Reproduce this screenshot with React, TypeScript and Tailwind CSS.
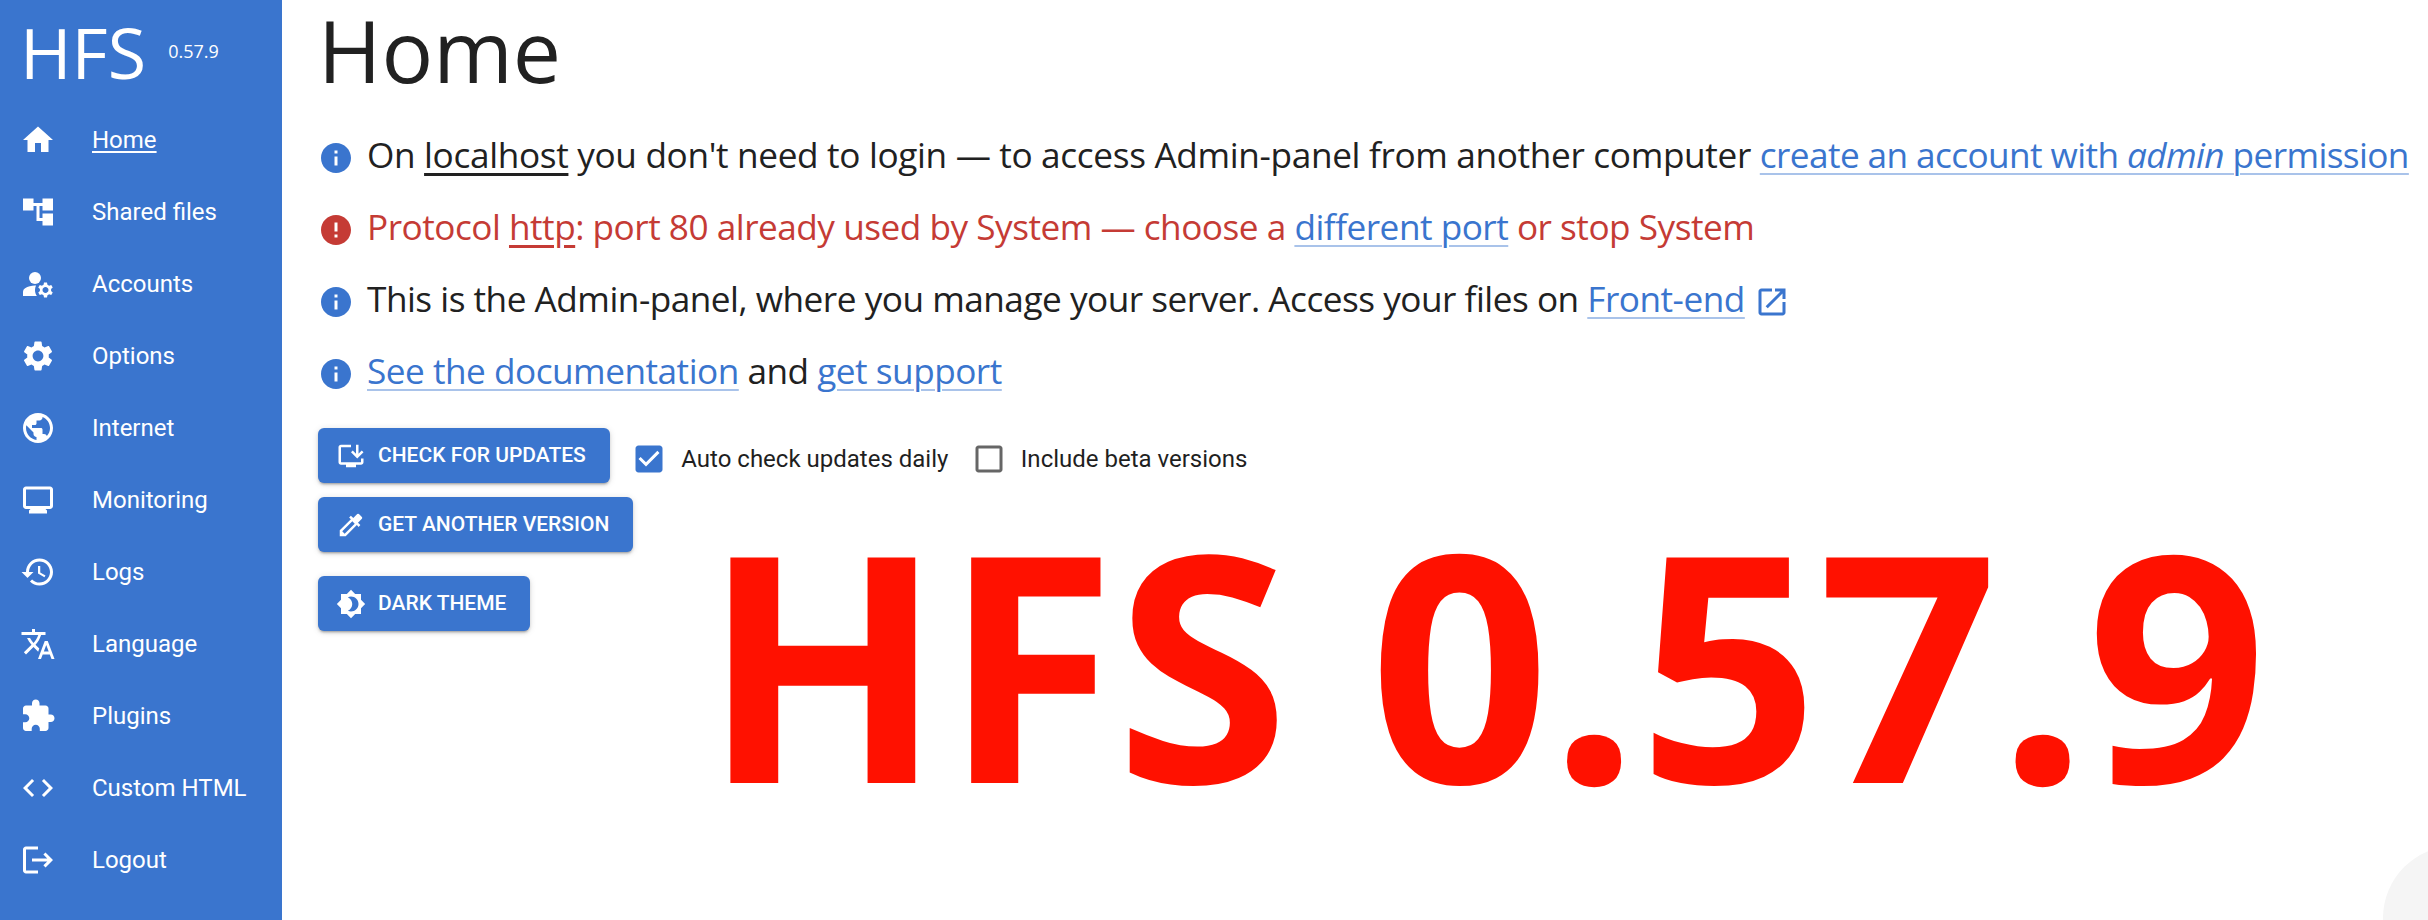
const navItems = [
  { label: 'Home', active: true, paths: ['M10 20v-6h4v6h5v-8h3L12 3 2 12h3v8z'] },
  { label: 'Shared files', paths: ['M22 11V3h-7v3H9V3H2v8h7V8h2v10h4v3h7v-8h-7v3h-2V8h2v3z'] },
  {
    label: 'Accounts',
    paths: [
      'M10.67 13.02c-.22-.01-.44-.02-.67-.02-2.42 0-4.68.67-6.61 1.82-.88.52-1.39 1.5-1.39 2.53V20h9.26c-.79-1.13-1.26-2.51-1.26-4 0-1.07.25-2.07.67-2.98z',
      'M14 8a4 4 0 1 1-8 0 4 4 0 0 1 8 0z',
      'M20.75 16c0-.22-.03-.42-.06-.63l1.14-1.01-1-1.73-1.45.49c-.32-.27-.68-.48-1.08-.63L18 11h-2l-.3 1.49c-.4.15-.76.36-1.08.63l-1.45-.49-1 1.73 1.14 1.01c-.03.21-.06.41-.06.63s.03.42.06.63l-1.14 1.01 1 1.73 1.45-.49c.32.27.68.48 1.08.63L16 21h2l.3-1.49c.4-.15.76-.36 1.08-.63l1.45.49 1-1.73-1.14-1.01c.03-.21.06-.41.06-.63zM17 18c-1.1 0-2-.9-2-2s.9-2 2-2 2 .9 2 2-.9 2-2 2z',
    ],
  },
  {
    label: 'Options',
    paths: [
      'M19.14 12.94c.04-.3.06-.61.06-.94 0-.32-.02-.64-.07-.94l2.03-1.58c.18-.14.23-.41.12-.61l-1.92-3.32c-.12-.22-.37-.29-.59-.22l-2.39.96c-.5-.38-1.03-.7-1.62-.94l-.36-2.54c-.04-.24-.24-.41-.48-.41h-3.84c-.24 0-.43.17-.47.41l-.36 2.54c-.59.24-1.13.57-1.62.94l-2.39-.96c-.22-.08-.47 0-.59.22L2.74 8.87c-.12.21-.08.47.12.61l2.03 1.58c-.05.3-.09.63-.09.94s.02.64.07.94l-2.03 1.58c-.18.14-.23.41-.12.61l1.92 3.32c.12.22.37.29.59.22l2.39-.96c.5.38 1.03.7 1.62.94l.36 2.54c.05.24.24.41.48.41h3.84c.24 0 .44-.17.47-.41l.36-2.54c.59-.24 1.13-.56 1.62-.94l2.39.96c.22.08.47 0 .59-.22l1.92-3.32c.12-.22.07-.47-.12-.61l-2.01-1.58zM12 15.6c-1.98 0-3.6-1.62-3.6-3.6s1.62-3.6 3.6-3.6 3.6 1.62 3.6 3.6-1.62 3.6-3.6 3.6z',
    ],
  },
  {
    label: 'Internet',
    paths: [
      'M12 2C6.48 2 2 6.48 2 12s4.48 10 10 10 10-4.48 10-10S17.52 2 12 2zm-1 17.93c-3.95-.49-7-3.85-7-7.93 0-.62.08-1.21.21-1.79L9 15v1c0 1.1.9 2 2 2v1.93zm6.9-2.54c-.26-.81-1-1.39-1.9-1.39h-1v-3c0-.55-.45-1-1-1H8v-2h2c.55 0 1-.45 1-1V7h2c1.1 0 2-.9 2-2v-.41c2.93 1.19 5 4.06 5 7.41 0 2.08-.8 3.97-2.1 5.39z',
    ],
  },
  {
    label: 'Monitoring',
    paths: ['M20 3H4c-1.1 0-2 .9-2 2v11c0 1.1.9 2 2 2h3l-1 1v2h12v-2l-1-1h3c1.1 0 2-.9 2-2V5c0-1.1-.9-2-2-2zm0 13H4V5h16v11z'],
  },
  {
    label: 'Logs',
    paths: [
      'M13 3c-4.97 0-9 4.03-9 9H1l3.89 3.89.07.14L9 12H6c0-3.87 3.13-7 7-7s7 3.13 7 7-3.13 7-7 7c-1.93 0-3.68-.79-4.94-2.06l-1.42 1.42C8.27 19.99 10.51 21 13 21c4.97 0 9-4.03 9-9s-4.03-9-9-9zm-1 5v5l4.28 2.54.72-1.21-3.5-2.08V8H12z',
    ],
  },
  {
    label: 'Language',
    paths: [
      'm12.87 15.07-2.54-2.51.03-.03c1.74-1.94 2.98-4.17 3.71-6.53H17V4h-7V2H8v2H1v1.99h11.17C11.5 7.92 10.44 9.75 9 11.35 8.07 10.32 7.3 9.19 6.69 8h-2c.73 1.63 1.73 3.17 2.98 4.56l-5.09 5.02L4 19l5-5 3.11 3.11.76-2.04zM18.5 10h-2L12 22h2l1.12-3h4.75L21 22h2l-4.5-12zm-2.62 7 1.62-4.33L19.12 17h-3.24z',
    ],
  },
  {
    label: 'Plugins',
    paths: [
      'M20.5 11H19V7c0-1.1-.9-2-2-2h-4V3.5C13 2.12 11.88 1 10.5 1S8 2.12 8 3.5V5H4c-1.1 0-1.99.9-1.99 2v3.8H3.5c1.49 0 2.7 1.21 2.7 2.7s-1.21 2.7-2.7 2.7H2V20c0 1.1.9 2 2 2h3.8v-1.5c0-1.49 1.21-2.7 2.7-2.7 1.49 0 2.7 1.21 2.7 2.7V22H17c1.1 0 2-.9 2-2v-4h1.5c1.38 0 2.5-1.12 2.5-2.5S21.88 11 20.5 11z',
    ],
  },
  { label: 'Custom HTML', paths: ['M9.4 16.6 4.8 12l4.6-4.6L8 6l-6 6 6 6 1.4-1.4zm5.2 0 4.6-4.6-4.6-4.6L16 6l6 6-6 6-1.4-1.4z'] },
  {
    label: 'Logout',
    paths: ['M17 7l-1.41 1.41L18.17 11H8v2h10.17l-2.58 2.58L17 17l5-5zM4 5h8V3H4c-1.1 0-2 .9-2 2v14c0 1.1.9 2 2 2h8v-2H4V5z'],
  },
];

const INFO = 'M12 2C6.48 2 2 6.48 2 12s4.48 10 10 10 10-4.48 10-10S17.52 2 12 2zm1 15h-2v-6h2v6zm0-8h-2V7h2v2z';
const ERROR = 'M12 2C6.48 2 2 6.48 2 12s4.48 10 10 10 10-4.48 10-10S17.52 2 12 2zm1 15h-2v-2h2v2zm0-4h-2V7h2v6z';
const OPEN_NEW =
  'M19 19H5V5h7V3H5c-1.11 0-2 .9-2 2v14c0 1.1.89 2 2 2h14c1.1 0 2-.9 2-2v-7h-2v7zM14 3v2h3.59l-9.83 9.83 1.41 1.41L19 6.41V10h2V3h-7z';
const INSTALL =
  'M20 17H4V5h8V3H4c-1.11 0-2 .89-2 2v12c0 1.1.89 2 2 2h4v2h8v-2h4c1.1 0 2-.9 2-2v-3h-2v3zM17 14l5-5-1.41-1.41L18 10.17V3h-2v7.17l-2.59-2.58L12 9z';
const COLORIZE =
  'M20.71 5.63l-2.34-2.34a.9959.9959 0 0 0-1.41 0l-3.12 3.12-1.93-1.91-1.41 1.41 1.42 1.42L3 16.25V21h4.75l8.92-8.92 1.42 1.42 1.41-1.41-1.92-1.92 3.12-3.12c.4-.4.4-1.03.01-1.42zM6.92 19 5 17.08l8.06-8.06 1.92 1.92L6.92 19z';
const NIGHT =
  'M20 8.69V4h-4.69L12 .69 8.69 4H4v4.69L.69 12 4 15.31V20h4.69L12 23.31 15.31 20H20v-4.69L23.31 12 20 8.69zM12 18c-.89 0-1.74-.2-2.5-.55C11.56 16.5 13 14.42 13 12s-1.44-4.5-3.5-5.45C10.26 6.2 11.11 6 12 6c3.31 0 6 2.69 6 6s-2.69 6-6 6z';
const CHECKED =
  'M19 3H5c-1.11 0-2 .9-2 2v14c0 1.1.89 2 2 2h14c1.11 0 2-.9 2-2V5c0-1.1-.89-2-2-2zm-9 14l-5-5 1.41-1.41L10 14.17l7.59-7.59L19 8l-9 9z';
const UNCHECKED = 'M19 5v14H5V5h14m0-2H5c-1.1 0-2 .9-2 2v14c0 1.1.9 2 2 2h14c1.1 0 2-.9 2-2V5c0-1.1-.9-2-2-2z';

function Icon({ paths, className }: { paths: string[]; className?: string }) {
  return (
    <svg viewBox="0 0 24 24" fill="currentColor" className={className}>
      {paths.map((d) => (
        <path key={d} d={d} />
      ))}
    </svg>
  );
}

function ActionButton({ icon, label, className }: { icon: string; label: string; className?: string }) {
  return (
    <button
      type="button"
      className={`flex h-[55px] items-center rounded-[6px] bg-[#3a75ce] pl-[18px] pr-[24px] text-[21px] font-medium uppercase text-white shadow-[0_3px_2px_-2px_rgba(0,0,0,0.2),0_2px_3px_0_rgba(0,0,0,0.14),0_1px_7px_0_rgba(0,0,0,0.12)] ${className ?? ''}`}
    >
      <Icon paths={[icon]} className="mr-[12px] size-[30px]" />
      {label}
    </button>
  );
}

function Check({ checked, label }: { checked?: boolean; label: string }) {
  return (
    <label className="flex items-center gap-[14px] text-[24px] text-[#1f1f1f]">
      <Icon paths={[checked ? CHECKED : UNCHECKED]} className={`size-[36px] ${checked ? 'text-[#3a75ce]' : 'text-[#666666]'}`} />
      {label}
    </label>
  );
}

function Row({ icon, red, children }: { icon: string; red?: boolean; children: React.ReactNode }) {
  return (
    <div className={`flex h-[72px] items-center gap-[13px] ${red ? 'text-[#c53b35]' : 'text-[#212121]'}`}>
      <Icon paths={[icon]} className={`mt-[4px] size-[36px] shrink-0 ${red ? 'text-[#c53b35]' : 'text-[#3a75ce]'}`} />
      <span className="mb-[4px]">{children}</span>
    </div>
  );
}

function BlueLink({ className, children }: { className?: string; children: React.ReactNode }) {
  return (
    <a className={`text-[#3a75ce] underline decoration-[#a9c3ea] decoration-[2px] underline-offset-[5px] ${className ?? ''}`}>
      {children}
    </a>
  );
}

export default function App() {
  return (
    <div className="relative flex h-[920px] w-[2428px] overflow-hidden bg-white font-['Roboto',sans-serif]">
      <nav className="w-[282px] shrink-0 bg-[#3a75ce] text-white">
        <div className="flex h-[104px] items-start pl-[20px] pt-[2px] font-['Open_Sans',sans-serif]">
          <span className="text-[70px] leading-[100px]">HFS</span>
          <span className="ml-[22px] mt-[37px] text-[18px] leading-[24px]">0.57.9</span>
        </div>
        {navItems.map((item) => (
          <div key={item.label} className="flex h-[72px] items-center pl-[20px] text-[24px]">
            <Icon paths={item.paths} className="size-[36px] shrink-0" />
            <span className={`ml-[36px] ${item.active ? 'underline underline-offset-[3px]' : ''}`}>{item.label}</span>
          </div>
        ))}
      </nav>

      <main className="min-w-0 flex-1 pl-[36px]">
        <h1 className="h-[120px] font-['Open_Sans',sans-serif] text-[86px] leading-[100px] text-[#212121]">Home</h1>
        <div className="whitespace-nowrap font-['Open_Sans',sans-serif] text-[35.2px] tracking-[-0.5px]">
          <Row icon={INFO}>
            <span className="tracking-[-0.34px]">
              On <span className="underline underline-offset-[5px]">localhost</span> you don't need to login — to access Admin-panel from another computer{' '}
            </span>
            <BlueLink className="tracking-[-0.6px]">
              create an account with <i>admin</i> permission
            </BlueLink>
          </Row>
          <Row icon={ERROR} red>
            Protocol <span className="underline underline-offset-[5px]">http</span>: port 80 already used by System — choose a{' '}
            <BlueLink>different port</BlueLink> or stop System
          </Row>
          <Row icon={INFO}>
            This is the Admin-panel, where you manage your server. Access your files on <BlueLink>Front-end</BlueLink>
            <Icon paths={[OPEN_NEW]} className="ml-[9px] inline size-[36px] align-[-8px] text-[#3a75ce]" />
          </Row>
          <Row icon={INFO}>
            <BlueLink>See the documentation</BlueLink> and <BlueLink>get support</BlueLink>
          </Row>
        </div>
        <div className="mt-[20px] flex items-center">
          <ActionButton icon={INSTALL} label="Check for updates" />
          <div className="ml-[21.5px] mt-[7px] flex gap-[22.5px]">
            <Check checked label="Auto check updates daily" />
            <Check label="Include beta versions" />
          </div>
        </div>
        <ActionButton icon={COLORIZE} label="Get another version" className="mt-[14px]" />
        <ActionButton icon={NIGHT} label="Dark theme" className="mt-[24px]" />
      </main>

      <div className="absolute left-[702px] top-[461px] whitespace-nowrap font-['Open_Sans',sans-serif] text-[316px] font-bold leading-[400px] tracking-[-1px] text-[#ff1100]">
        HFS 0.57.9
      </div>
      <div className="absolute left-[2383px] top-[846px] size-[144px] rounded-full bg-[#f5f5f5]" />
    </div>
  );
}
